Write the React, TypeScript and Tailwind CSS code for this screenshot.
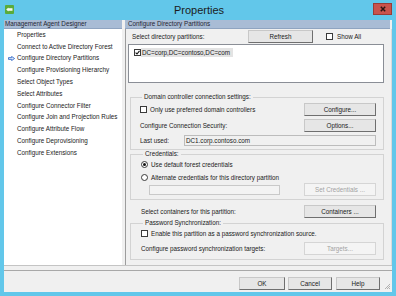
const FONT = "font-['Liberation_Sans','Arial',sans-serif]"

function Btn({ label, w, disabled }: { label: string; w: string; disabled?: boolean }) {
  return (
    <div
      className={`${w} h-[13px] shrink-0 flex items-center justify-center border ${
        disabled
          ? 'border-[#d5d5d5] bg-[#f4f4f4] text-[#a3a3a3]'
          : 'border-[#c8c8c8] border-r-[#6f6f6f] border-b-[#6f6f6f] bg-[#e6e6e6] text-[#1a1a1a]'
      }`}
    >
      {label}
    </div>
  )
}

function Check({ checked }: { checked?: boolean }) {
  return (
    <div className="w-[7px] h-[7px] shrink-0 border border-[#3a3a3a] bg-white flex items-center justify-center">
      {checked && (
        <svg width="5" height="5" viewBox="0 0 5 5">
          <path d="M0.6 2.6 L2 4 L4.5 0.8" fill="none" stroke="#111" strokeWidth="1.1" />
        </svg>
      )}
    </div>
  )
}

function Radio({ checked }: { checked?: boolean }) {
  return (
    <div className="w-[7px] h-[7px] shrink-0 rounded-full border border-[#3a3a3a] bg-white flex items-center justify-center">
      {checked && <div className="w-[3px] h-[3px] rounded-full bg-[#111]" />}
    </div>
  )
}

const steps = [
  'Properties',
  'Connect to Active Directory Forest',
  'Configure Directory Partitions',
  'Configure Provisioning Hierarchy',
  'Select Object Types',
  'Select Attributes',
  'Configure Connector Filter',
  'Configure Join and Projection Rules',
  'Configure Attribute Flow',
  'Configure Deprovisioning',
  'Configure Extensions',
]

export default function App() {
  return (
    <div className={`w-[396px] h-[296px] bg-[#62c7ea] flex flex-col ${FONT} text-[6.3px] text-[#1a1a1a]`}>
      {/* title bar */}
      <div className="h-[20px] grid grid-cols-[1fr_auto_1fr]">
        <div className="pl-[5px] pt-[5px]">
          <svg width="9" height="9" viewBox="0 0 9 9">
            <rect x="0" y="0" width="9" height="9" rx="1" fill="#5aab3a" />
            <rect x="3" y="3.2" width="4.5" height="2.6" fill="#f2f7ee" />
            <path d="M1.2 4.5 L3.4 2.4 L3.4 6.6 Z" fill="#f2f7ee" />
          </svg>
        </div>
        <div className="text-[11px] leading-[20px] text-[#1b1b1b] pl-[2px]">Properties</div>
        <div className="flex justify-end pr-[4px] pt-[3px]">
          <div className="w-[19px] h-[12px] bg-[#c9534c] border border-[#9a3b36] flex items-center justify-center">
            <svg width="6" height="6" viewBox="0 0 6 6">
              <path d="M0.8 0.8 L5.2 5.2 M5.2 0.8 L0.8 5.2" stroke="#2b1514" strokeWidth="1.5" />
            </svg>
          </div>
        </div>
      </div>

      {/* body */}
      <div className="flex-1 mx-[4px] mb-[4px] bg-[#f0f0f0] flex flex-col">
        <div className="h-[245px] flex">
          {/* left column */}
          <div className="w-[118px] flex flex-col">
            <div className="h-[9px] bg-[#a9bcd5] border-b border-[#8fa4c0] leading-[8px] pl-[1px] text-[#1f2633]">
              Management Agent Designer
            </div>
            <div className="flex-1 bg-white flex flex-col">
              {steps.map((s, i) => (
                <div key={s} className="h-[11.8px] flex items-center">
                  <div className="w-[13px] pl-[4px] flex items-center">
                    {i === 2 && (
                      <svg width="7" height="5" viewBox="0 0 7 5">
                        <path d="M0.5 1.6 H3.6 V0.4 L6.6 2.5 L3.6 4.6 V3.4 H0.5 Z" fill="#d7e6fa" stroke="#2b62c4" strokeWidth="0.8" />
                      </svg>
                    )}
                  </div>
                  <span className="leading-none">{s}</span>
                </div>
              ))}
            </div>
          </div>

          <div className="w-[3px]" />

          {/* right column */}
          <div className="flex-1 flex flex-col">
            <div className="h-[9px] bg-[#a9bcd5] border-b border-[#8fa4c0] leading-[8px] pl-[3px] mr-[2px] text-[#1f2633]">
              Configure Directory Partitions
            </div>
            <div className="flex-1 border-l border-[#9c9c9c] border-r border-r-[#dadada] pl-[2px] pr-[7px] flex flex-col">
              <div className="mt-[1px] h-[13px] flex items-center">
                <span className="ml-[4px] w-[116px]">Select directory partitions:</span>
                <Btn label="Refresh" w="w-[65px]" />
                <div className="ml-[13px]">
                  <Check />
                </div>
                <span className="ml-[4px]">Show All</span>
              </div>

              <div className="mt-[1px] h-[39px] border border-[#8a8e96] bg-white">
                <div className="mt-[3px] ml-[5px] h-[9px] flex items-center">
                  <Check checked />
                  <span className="bg-[#e3e3e3] h-[9px] leading-[9px] px-[1px] pr-[3px]">DC=corp,DC=contoso,DC=com</span>
                </div>
              </div>

              <fieldset className="mt-[10px] ml-[2px] border border-[#d3d3d3] pl-[9px] pr-[7px] pb-[3px]">
                <legend className="ml-[2px] px-[2px] h-[8px] leading-[8px]">Domain controller connection settings:</legend>
                <div className="mt-[2px] h-[13px] flex items-center">
                  <Check />
                  <span className="ml-[3px] flex-1">Only use preferred domain controllers</span>
                  <Btn label="Configure..." w="w-[72px]" />
                </div>
                <div className="mt-[3px] h-[13px] flex items-center">
                  <span className="flex-1">Configure Connection Security:</span>
                  <Btn label="Options..." w="w-[72px]" />
                </div>
                <div className="mt-[3px] h-[11px] flex items-center">
                  <span className="w-[44px]">Last used:</span>
                  <div className="flex-1 h-[11px] border border-[#bcbcbc] bg-[#f0f0f0] leading-[9px] pl-[1px]">
                    DC1.corp.contoso.com
                  </div>
                </div>
              </fieldset>

              <fieldset className="ml-[2px] border border-[#d3d3d3] pl-[10px] pr-[7px] pb-[3px]">
                <legend className="ml-[2px] px-[2px] h-[8px] leading-[8px]">Credentials:</legend>
                <div className="mt-[2px] h-[9px] flex items-center">
                  <Radio checked />
                  <span className="ml-[3px]">Use default forest credentials</span>
                </div>
                <div className="mt-[4px] h-[9px] flex items-center">
                  <Radio />
                  <span className="ml-[3px]">Alternate credentials for this directory partition</span>
                </div>
                <div className="mt-[1px] h-[13px] flex items-center">
                  <div className="ml-[8px] w-[131px] h-[10px] border border-[#c9c9c9] bg-[#f3f3f3]" />
                  <div className="flex-1" />
                  <Btn label="Set Credentials ..." w="w-[72px]" disabled />
                </div>
              </fieldset>

              <div className="mt-[5px] h-[13px] flex items-center pl-[13px] pr-[8px]">
                <span className="flex-1">Select containers for this partition:</span>
                <Btn label="Containers ..." w="w-[72px]" />
              </div>

              <fieldset className="mt-[1px] ml-[2px] border border-[#d3d3d3] pl-[10px] pr-[7px] pb-[4px]">
                <legend className="ml-[2px] px-[2px] h-[8px] leading-[8px]">Password Synchronization:</legend>
                <div className="mt-[2px] h-[9px] flex items-center">
                  <Check />
                  <span className="ml-[3px]">Enable this partition as a password synchronization source.</span>
                </div>
                <div className="mt-[4px] h-[13px] flex items-center">
                  <span className="flex-1">Configure password synchronization targets:</span>
                  <Btn label="Targets..." w="w-[72px]" disabled />
                </div>
              </fieldset>
            </div>
          </div>
        </div>

        {/* bottom buttons */}
        <div className="flex-1 border-t border-[#c4c4c4] flex flex-col">
          <div className="mt-[4px] border-t border-[#a8a8a8]" />
          <div className="mt-[6px] flex items-start pr-[12px] justify-end relative">
            <Btn label="OK" w="w-[46px]" />
            <div className="ml-[3px]">
              <Btn label="Cancel" w="w-[44px]" />
            </div>
            <div className="ml-[4px]">
              <Btn label="Help" w="w-[44px]" />
            </div>
            <svg className="absolute right-[1px] top-[6px]" width="7" height="7" viewBox="0 0 7 7">
              <path d="M6 1 L1 6 M6 3 L3 6 M6 5 L5 6" stroke="#a0a0a0" strokeWidth="0.8" />
            </svg>
          </div>
        </div>
      </div>
    </div>
  )
}
